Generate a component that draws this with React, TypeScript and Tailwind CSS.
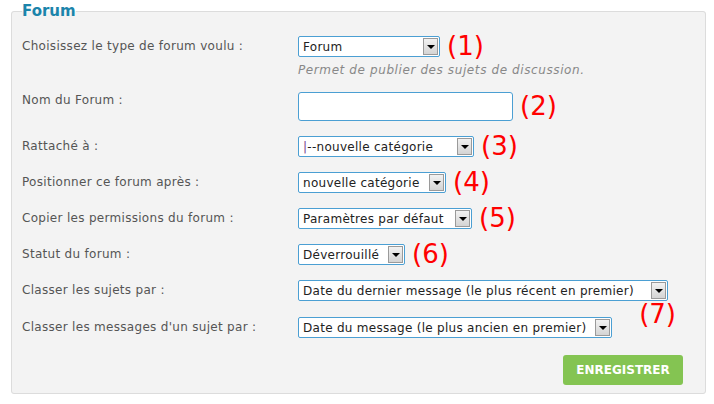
const font = { fontFamily: '"DejaVu Sans", Verdana, sans-serif' };

const Arrow = () => (
  <div className="ml-auto mr-[1px] flex h-[17px] w-[15px] shrink-0 items-center justify-center border border-[#9a9a9a] bg-gradient-to-b from-[#f2f2f2] to-[#d4d4d4]">
    <div className="h-0 w-0 border-x-[4px] border-t-[4px] border-x-transparent border-t-black" />
  </div>
);

const Select = ({ value, width, bar }: { value: string; width: string; bar?: boolean }) => (
  <div className={`flex h-[21px] ${width} shrink-0 items-center rounded-[2px] border border-[#4b9fd3] bg-white pl-[4px] text-[12px] tracking-[0.28px] text-[#222]`}>
    {bar && <span className="text-[#7a3c8c]">|</span>}
    <span className="whitespace-nowrap">{bar ? '--' + value : value}</span>
    <Arrow />
  </div>
);

const Mark = ({ n }: { n: number }) => (
  <span className="ml-[7px] text-[26px] leading-[21px] text-[#ff0000]">({n})</span>
);

const Label = ({ children, lh = 'leading-[21px]' }: { children: string; lh?: string }) => (
  <div className={`w-[276px] shrink-0 text-[12px] tracking-[0.3px] text-[#555] ${lh}`}>{children}</div>
);

const rows = [
  { label: 'Rattaché à :', value: 'nouvelle catégorie', width: 'w-[176px]', n: 3, bar: true },
  { label: 'Positionner ce forum après :', value: 'nouvelle catégorie', width: 'w-[148px]', n: 4 },
  { label: 'Copier les permissions du forum :', value: 'Paramètres par défaut', width: 'w-[174px]', n: 5 },
  { label: 'Statut du forum :', value: 'Déverrouillé', width: 'w-[107px]', n: 6 },
];

export default function App() {
  return (
    <div className="min-h-[404px] w-[714px] bg-white" style={font}>
      <fieldset className="ml-[11px] w-[695px] rounded-[3px] border border-[#dcdcdc] bg-[#f3f3f3] pb-[8px] pl-[10px] pr-[22px] pt-[14px]">
        <legend className="text-[15px] font-bold leading-[22px] text-[#1b84ab]">Forum</legend>

        {/* type */}
        <div className="flex">
          <Label>Choisissez le type de forum voulu :</Label>
          <div>
            <div className="flex items-center">
              <Select value="Forum" width="w-[142px]" />
              <Mark n={1} />
            </div>
            <p className="mt-[6px] text-[12px] italic leading-[14px] tracking-[0.6px] text-[#888]">Permet de publier des sujets de discussion.</p>
          </div>
        </div>

        {/* nom */}
        <div className="mt-[15px] flex">
          <Label lh="leading-[17px]">Nom du Forum :</Label>
          <div className="flex items-center">
            <input className="h-[29px] w-[215px] rounded-[3px] border border-[#4b9fd3] bg-white outline-none" />
            <Mark n={2} />
          </div>
        </div>

        {rows.map((r) => (
          <div key={r.n} className="mt-[15px] flex">
            <Label>{r.label}</Label>
            <div className="flex items-center">
              <Select value={r.value} width={r.width} bar={r.bar} />
              <Mark n={r.n} />
            </div>
          </div>
        ))}

        <div className="mt-[15px] flex">
          <Label>Classer les sujets par :</Label>
          <div className="relative">
            <Select value="Date du dernier message (le plus récent en premier)" width="w-[370px]" />
            <span className="absolute right-[-8px] top-[24px] text-[26px] leading-[21px] text-[#ff0000]">(7)</span>
          </div>
        </div>

        <div className="mt-[16px] flex">
          <Label>Classer les messages d'un sujet par :</Label>
          <Select value="Date du message (le plus ancien en premier)" width="w-[314px]" />
        </div>

        <div className="mt-[17px] flex justify-end">
          <button className="h-[30px] w-[120px] rounded-[3px] bg-[#84c452] text-[12px] font-bold text-white">ENREGISTRER</button>
        </div>
      </fieldset>
    </div>
  );
}
